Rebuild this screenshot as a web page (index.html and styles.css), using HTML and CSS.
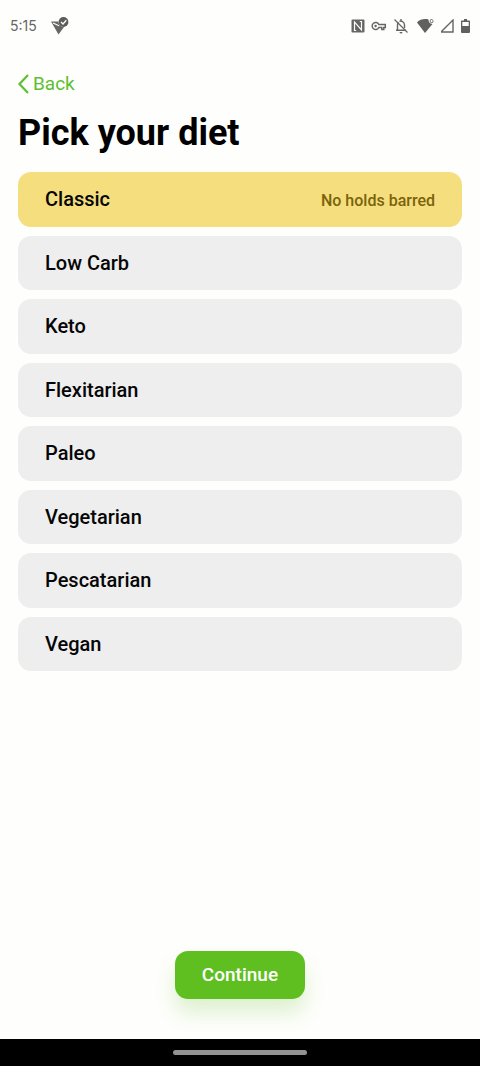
FILE: index.html
```html
<!DOCTYPE html>
<html lang="en">
<head>
<meta charset="utf-8">
<meta name="viewport" content="width=device-width, initial-scale=1">
<title>Pick your diet</title>
<link rel="stylesheet" href="styles.css">
</head>
<body>
<header class="status">
  <span class="time">5:15</span>
  <svg class="notice" width="18" height="18" viewBox="0 0 18 18" aria-hidden="true">
    <path d="M0 4.500h7.500c0 3 2 5.500 5.500 5.500l-5.500 7.500z" fill="#666"/>
    <path d="M2 6l6 2.800" stroke="#fefefc" stroke-width="1.100" fill="none"/>
    <circle cx="12.500" cy="5" r="4.900" fill="#5c5c5c"/>
    <path d="M10 5l2 2 3.300-3.700" stroke="#fefefc" stroke-width="1.300" fill="none"/>
  </svg>
  <div class="indicators">
    <svg width="14" height="14" viewBox="0 0 14 14" aria-hidden="true">
      <rect x="0.500" y="0.500" width="13" height="13" rx="1" fill="#666"/>
      <path d="M5.200 11.500H3.500V3L10.500 11V2.500H8.800" fill="none" stroke="#fefefc" stroke-width="1.200"/>
    </svg>
    <svg width="16" height="10" viewBox="0 0 16 10" aria-hidden="true">
      <path d="M7.800 3.500h6.500v3h-1.500v2h-2v-2h-3a3.500 3.500 0 1 1 0-3z" fill="none" stroke="#666" stroke-width="1.500"/>
      <circle cx="4.600" cy="5" r="1.200" fill="#666"/>
    </svg>
    <svg width="16" height="16" viewBox="0 0 16 16" aria-hidden="true">
      <path d="M3 12.300h10M4.500 12V7c0-1 .3-2 1-2.700M6.500 3.500C8 2.500 11.500 3.500 11.500 7v3M8 1v2" fill="none" stroke="#666" stroke-width="1.400"/>
      <path d="M6.500 14h3a1.500 1.500 0 0 1-3 0z" fill="#666"/>
      <path d="M1.500 1.500l13 13" stroke="#666" stroke-width="1.300"/>
    </svg>
    <svg class="wifi" width="18" height="16" viewBox="0 0 18 16" aria-hidden="true">
      <path d="M0 4.500C3 1 8 .5 11.500 1.500c0 2.300.8 4 4 4.500L8 15z" fill="#606060"/>
      <path d="M14.500 1c1 1.200 1.500 1.700 1.500 2.300a1.400 1.400 0 0 1-2.800 0c0-.7.400-1.200 1.300-2.300z" fill="none" stroke="#666" stroke-width="1"/>
    </svg>
    <svg width="14" height="14" viewBox="0 0 14 14" aria-hidden="true">
      <path d="M0 13L12 1V13z" fill="none" stroke="#666" stroke-width="1.400"/>
    </svg>
    <svg width="9" height="14" viewBox="0 0 9 14" aria-hidden="true">
      <path d="M3 0h3v1.500h2.300q.7 0 .7.700V13q0 1-1 1H1q-1 0-1-1V2.200q0-.7.700-.7H3z" fill="#606060"/>
      <path d="M1.300 3h6.400v4H1.300z" fill="#fefefc"/>
    </svg>
  </div>
</header>
<main class="screen">
  <a class="back" href="#">
    <svg width="11" height="20" viewBox="0 0 11 20" aria-hidden="true"><path d="M10 1L1.500 10l8.500 9" fill="none" stroke="#5fbe32" stroke-width="2.200"/></svg>
    <span>Back</span>
  </a>
  <h1 class="title">Pick your diet</h1>
  <form class="form">
    <div class="options" role="radiogroup" aria-label="Diet">
      <label class="option"><input class="radio" type="radio" name="diet" checked><span>Classic</span><span class="hint">No holds barred</span></label>
      <label class="option"><input class="radio" type="radio" name="diet"><span>Low Carb</span></label>
      <label class="option"><input class="radio" type="radio" name="diet"><span>Keto</span></label>
      <label class="option"><input class="radio" type="radio" name="diet"><span>Flexitarian</span></label>
      <label class="option"><input class="radio" type="radio" name="diet"><span>Paleo</span></label>
      <label class="option"><input class="radio" type="radio" name="diet"><span>Vegetarian</span></label>
      <label class="option"><input class="radio" type="radio" name="diet"><span>Pescatarian</span></label>
      <label class="option"><input class="radio" type="radio" name="diet"><span>Vegan</span></label>
    </div>
    <button class="continue" type="button">Continue</button>
  </form>
</main>
<footer class="gesture"><div class="pill"></div></footer>
</body>
</html>
```
FILE: styles.css
```css
* {
  box-sizing: border-box;
}

body {
  margin: 0;
  min-height: 100vh;
  display: flex;
  flex-direction: column;
  background: #fefefc;
  color: #060606;
  font-family: Roboto, "Liberation Sans", sans-serif;
}

svg {
  display: block;
  flex: none;
}

.status {
  display: flex;
  align-items: center;
  height: 52px;
  padding: 0 10px;
}

.time {
  font-family: Inter, sans-serif;
  font-size: 14px;
  line-height: 20px;
  color: #666;
}

.notice {
  margin-left: 14px;
}

.indicators {
  display: flex;
  align-items: center;
  gap: 6px;
  margin-left: auto;
}

.wifi {
  margin-left: 2px;
}

.screen {
  flex: 1;
  display: flex;
  flex-direction: column;
  padding: 20px 18px 40px;
}

.back {
  display: flex;
  align-items: center;
  align-self: flex-start;
  gap: 4px;
  color: #5fbe32;
  font-size: 19px;
  line-height: 24px;
  text-decoration: none;
}

.title {
  margin: 16px 0 18px;
  font-size: 36px;
  line-height: 42px;
  font-weight: 700;
  color: #000;
}

.form {
  flex: 1;
  display: flex;
  flex-direction: column;
}

.options {
  display: grid;
  grid-auto-rows: 1fr;
  gap: 9px;
  min-height: 499px;
}

.option {
  display: flex;
  flex-wrap: wrap;
  align-items: baseline;
  align-content: center;
  justify-content: space-between;
  padding: 0 27px;
  border-radius: 13px;
  background: #eee;
  font-size: 20px;
  line-height: 24px;
  font-weight: 500;
  cursor: pointer;
}

.option:has(.radio:checked) {
  background: #f5de7e;
}

.radio {
  position: absolute;
  appearance: none;
  margin: 0;
}

.hint {
  font-size: 16px;
  line-height: 16px;
  color: #7a630c;
}

.continue {
  align-self: center;
  margin-top: auto;
  padding: 12px 27px;
  border: 0;
  border-radius: 13px;
  background: #5fbf21;
  box-shadow: 0 14px 20px rgba(95, 191, 33, 0.2);
  color: #fff;
  font: inherit;
  font-size: 19px;
  line-height: 24px;
  font-weight: 500;
}

.gesture {
  display: flex;
  align-items: center;
  justify-content: center;
  height: 27px;
  background: #000;
}

.pill {
  width: 134px;
  height: 5px;
  border-radius: 3px;
  background: #929292;
}
```
